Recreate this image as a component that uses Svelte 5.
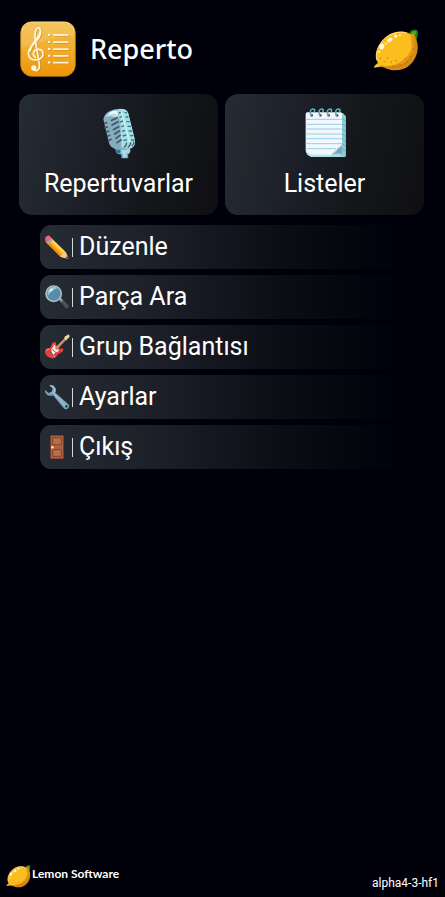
<script lang="ts">
  const version = 'alpha4-3-hf1';
  const menu = [
    { icon: 'pencil', label: 'Düzenle' },
    { icon: 'search', label: 'Parça Ara' },
    { icon: 'guitar', label: 'Grup Bağlantısı' },
    { icon: 'wrench', label: 'Ayarlar' },
    { icon: 'door', label: 'Çıkış' },
  ];
</script>

{#snippet lemon()}
  <svg class="lemon" viewBox="38 36 140 128" aria-hidden="true">
    <path d="M150 48 Q154 38 168 40 L174 42 Q176 56 171 70 L160 62Z" fill="#1f7a1c" />
    <path d="M154 47 L168 43 L171 52 L160 58Z" fill="#49a62a" />
    <path d="M42 154 L53 142 C42 121 49 91 69 69 C90 47 122 39 150 51 L158 51 Q168 55 168 65 C181 93 172 128 150 147 C130 166 98 168 75 156 Q61 151 42 154Z" fill="#d98a16" />
    <path d="M42 153 L54 140 C43 119 51 91 71 70 C91 49 122 42 148 53 L162 57 C170 88 162 119 138 138 C113 156 80 152 60 149Z" fill="#fcbe1f" />
    <path d="M152 54 L164 58 C172 91 160 124 137 143 C116 158 93 155 77 150 C116 151 149 125 156 92Z" fill="#b8660e" opacity=".4" />
    <path d="M50 133 C43 111 55 84 73 68 C91 50 117 43 140 50" fill="none" stroke="#ffe889" stroke-width="3" />
    <path d="M50 143 L42 154 L60 151" fill="none" stroke="#fff0b0" stroke-width="2" />
    <g fill="#fffbe5">
      <ellipse cx="89" cy="71" rx="9" ry="6" transform="rotate(-35 89 71)" />
      <ellipse cx="65" cy="91" rx="7" ry="9" transform="rotate(25 65 91)" />
      <circle cx="107" cy="59" r="5" /><circle cx="120" cy="57" r="3" />
      <circle cx="77" cy="82" r="3" /><circle cx="57" cy="107" r="3" />
    </g>
    <g fill="#b86b0b">
      <circle cx="61" cy="128" r="2" /><circle cx="72" cy="136" r="2" /><circle cx="82" cy="126" r="2" />
      <circle cx="94" cy="138" r="2" /><circle cx="108" cy="134" r="2" /><circle cx="120" cy="146" r="2" />
      <circle cx="136" cy="128" r="2" /><circle cx="151" cy="121" r="2" /><circle cx="161" cy="98" r="2" />
      <circle cx="144" cy="139" r="2" /><circle cx="99" cy="151" r="2" />
    </g>
  </svg>
{/snippet}

<div class="app">
  <header>
    <svg class="logo" viewBox="30 35 166 166" aria-hidden="true">
      <defs>
        <linearGradient id="gold" x1="0" y1="0" x2="0" y2="1">
          <stop offset="0" stop-color="#f1bd45" />
          <stop offset=".5" stop-color="#f2ae2c" />
          <stop offset="1" stop-color="#ec9307" />
        </linearGradient>
      </defs>
      <rect x="32" y="37" width="162" height="162" rx="34" fill="url(#gold)" stroke="#c98a20" stroke-width="2" />
      <path d="M34 68 Q34 39 62 39 H164 Q192 39 192 67 V82 Q130 82 88 99 Q56 112 34 112Z" fill="#fff" opacity=".13" />
      <path d="M36 61 Q40 40 62 39 H164 Q185 40 190 61" fill="none" stroke="#ffe19a" stroke-width="2" />
      {#each ['dark', 'light'] as tone}
        <g class={tone}>
          <path d="M71 180 Q81 187 87 174 Q89 166 84 145 L76 96 C72 75 75 58 84 55 C93 57 93 73 85 86 C75 101 55 113 55 131 C55 145 65 151 78 150 C92 149 100 140 98 130 C95 115 75 117 70 129 Q68 138 76 143" fill="none" stroke-width="5" stroke-linecap="round" />
          <path d="M91 68 C84 90 62 102 59 125" fill="none" stroke-width="6" />
          <circle cx="71" cy="174" r="8" stroke="none" />
          {#each [76, 97, 118, 138, 158] as y}
            <rect x="113" y={y - 3} width="7" height="6" stroke="none" />
            <rect x="128" y={y - 2} width="46" height="5" stroke="none" />
          {/each}
        </g>
      {/each}
    </svg>
    <h1>Reperto</h1>
    {@render lemon()}
  </header>

  <main>
    <div class="cards">
      <button class="card">
        <svg viewBox="-4 20 150 156" aria-hidden="true">
          <path d="M64 143 L102 143 L106 151 Q104 160 98 163 L99 174 H78 V163 L66 160 Q60 155 60 146Z" fill="#6fa5b9" />
          <path d="M78 145 H105 L101 159 H94 V172 H83 L82 159 H77Z" fill="#a4dce6" />
          <circle cx="69" cy="153" r="6" fill="#20768a" />
          <path d="M24 57 Q26 43 39 34 Q60 22 84 26 Q96 28 99 39 L118 116 Q123 134 110 143 Q91 154 60 146 Q45 142 41 128Z" fill="#86acbd" />
          <path d="M67 28 Q93 20 99 40 L118 116 Q123 135 109 142 Q94 148 78 141 L75 67Z" fill="#a5dfe7" />
          <path d="M29 51 Q43 28 67 30 L72 56 Q49 43 29 51Z" fill="#b9dbe5" />
          <path d="M42 37 Q53 30 65 32 L67 44 Q55 37 42 44Z" fill="#ecf8fa" />
          <g fill="none" stroke="#405565" stroke-width="5" stroke-linecap="round">
            <path d="M28 69 L34 67 M29 82 L36 80 M33 95 L40 92 M37 108 L43 105 M40 121 L47 117" />
            <path d="M49 60 L66 52 M50 74 L68 64 M54 88 L70 79 M58 101 L72 92 M62 114 L74 105 M65 127 L77 119" />
          </g>
          <g fill="none" stroke="#367a88" stroke-width="4">
            <path d="M70 38 L80 35 M88 37 L95 37 M72 51 L81 48 M91 50 L99 50 M74 65 L84 62 M93 64 L103 64 M78 79 L87 76 M97 78 L107 78 M80 93 L90 90 M100 92 L110 92 M82 107 L93 104 M104 106 L114 106 M84 121 L95 118 M107 119 L118 119" />
            <path d="M86 141 Q93 137 94 127 M97 141 Q106 136 106 126 M109 137 Q116 132 116 124" stroke="#405565" />
          </g>
          <path d="M77 31 L103 126" stroke="#caf3f5" stroke-width="4" />
        </svg>
        Repertuvarlar
      </button>
      <button class="card">
        <svg viewBox="4 18 150 156" aria-hidden="true">
          <path d="M29 36 H132 L141 45 V166 Q140 168 136 168 H37 L25 159Z" fill="#a8dce5" />
          <path d="M130 39 L141 47 V166 H127Z" fill="#8acbd6" />
          <path d="M26 34 H126 Q130 34 130 39 V131 L99 161 H34 L21 151 V39 Q21 34 26 34Z" fill="#f3f7fc" />
          <path d="M21 151 L34 161 H99 L96 166 H34 Q24 163 21 151Z" fill="#c4e3e9" />
          <path d="M21 55 H130 M21 70 H130 M21 84 H130 M21 99 H130 M21 113 H130 M21 128 H130 M21 143 H112" stroke="#93cfed" stroke-width="3" />
          <path d="M99 158 Q116 154 117 142 Q129 140 130 130 V158Z" fill="#75a8bc" />
          <path d="M99 158 Q116 154 117 142 Q129 140 130 130 Z" fill="#b3d9e3" />
          <path d="M132 54 L140 61 M132 69 L140 76 M132 84 L140 91 M132 99 L140 106 M132 114 L140 121 M132 129 L140 136 M132 144 L140 151" stroke="#4c9baa" stroke-width="2" />
          {#each [37, 63, 88, 113] as x}
            <circle cx={x + 2} cy="43" r="4" fill="#33485b" />
            <path d="M{x} 43 Q{x - 6} 25 {x + 6} 24 Q{x + 13} 24 {x + 10} 31" fill="none" stroke="#5baebb" stroke-width="5" stroke-linecap="round" />
          {/each}
        </svg>
        Listeler
      </button>
    </div>

    <nav>
      {#each menu as item}
        <button class="row">
          <svg viewBox="0 0 78 78" aria-hidden="true">
            {#if item.icon === 'pencil'}
              <path d="M19 12 L65 54 L74 74 Q73 76 69 75 L49 68 L6 25Z" fill="#f9b41d" />
              <path d="M22 12 L64 53 L59 59 L16 18Z" fill="#ffd34f" />
              <path d="M11 21 L53 64 L49 68 L7 26Z" fill="#e88a16" />
              <path d="M65 54 L74 74 L49 68 L55 60Z" fill="#efc997" />
              <path d="M70 66 L74 74 Q72 76 64 73Z" fill="#38434d" />
              <path d="M17 8 L27 18 L13 31 L4 22Z" fill="#9aafba" />
              <path d="M3 17 Q2 10 9 6 Q15 2 20 9 L23 13 L9 26 L6 23Z" fill="#f06376" />
            {:else if item.icon === 'search'}
              <path d="M44 46 L51 41 L59 50 L52 57Z" fill="#8a989e" />
              <path d="M51 55 L58 48 L73 64 Q76 69 71 73 Q67 75 63 70Z" fill="#4c4f53" />
              <circle cx="29" cy="29" r="23" fill="#578da9" stroke="#a8bbc2" stroke-width="5" />
              <path d="M12 35 A19 19 0 0 1 41 13 Q25 16 12 35Z" fill="#9bc6d6" />
              <ellipse cx="21" cy="18" rx="7" ry="4" fill="#d8edf1" transform="rotate(-35 21 18)" />
            {:else if item.icon === 'guitar'}
              <path d="M3 54 Q3 43 14 42 Q22 41 22 33 Q23 25 31 24 Q38 24 36 32 L48 45 Q56 40 58 46 Q59 53 50 56 Q40 59 38 67 Q32 76 20 72 Q4 67 3 54Z" fill="#ee3b3b" />
              <path d="M22 45 Q29 39 30 31 Q34 35 35 38 L44 47 Q47 51 38 54 Q31 57 28 63 Q21 56 22 45Z" fill="#f6efe8" />
              <path d="M32 43 L61 13 L66 18 L38 49Z" fill="#b98762" />
              <path d="M35 44 L63 15" stroke="#e0b993" stroke-width="2" />
              <path d="M60 12 L64 6 Q70 5 74 1 L77 7 Q75 13 70 15 L66 20Z" fill="#efcf9c" />
              <path d="M25 46 L35 55 M18 54 L26 62" stroke="#505b62" stroke-width="3" />
              <path d="M7 51 Q8 46 15 46" fill="none" stroke="#ff8a80" stroke-width="3" />
              <circle cx="31" cy="67" r="2" fill="#ffc0a0" />
            {:else if item.icon === 'wrench'}
              <path d="M16 4 Q28 1 34 11 Q38 18 34 26 L73 61 Q78 67 72 73 Q66 79 60 73 L27 34 Q18 38 9 32 Q2 27 3 18 L14 27 L23 23 L26 14Z" fill="#7eacc0" />
              <path d="M18 5 Q28 4 31 12 Q34 21 28 28 L65 67" fill="none" stroke="#a8cdda" stroke-width="3" />
              <path d="M6 26 Q15 35 27 32 L60 73" fill="none" stroke="#527e94" stroke-width="2" />
              <circle cx="67" cy="67" r="4" fill="#304651" />
            {:else}
              <rect x="18" y="3" width="42" height="72" rx="2" fill="#793a26" />
              <rect x="21" y="6" width="36" height="67" fill="#ae6243" />
              <path d="M26 11 H52 V32 H26Z M26 47 H52 V67 H26Z" fill="#b66f4e" stroke="#80432e" stroke-width="3" />
              <circle cx="25" cy="40" r="4" fill="#ffd9b0" />
            {/if}
          </svg>
          <span class="divider"></span>
          {item.label}
        </button>
      {/each}
    </nav>
  </main>

  <footer>
    <div class="brand">
      {@render lemon()}
      <span>Lemon Software</span>
    </div>
    <span class="version">{version}</span>
  </footer>
</div>

<style>
  :global(body) {
    margin: 0;
    background: #00000a;
  }
  .app {
    display: flex;
    flex-direction: column;
    min-height: 100vh;
    box-sizing: border-box;
    color: #fff;
    font-family: Roboto, sans-serif;
  }
  header {
    display: flex;
    align-items: center;
    padding: 21px 26px 17px 20px;
  }
  .logo {
    width: 56px;
    height: 56px;
  }
  .dark {
    fill: #b9781b;
    stroke: #b9781b;
    transform: translate(2px, 2px);
    opacity: .6;
  }
  .light {
    fill: #fff6df;
    stroke: #fff6df;
  }
  h1 {
    flex: 1;
    margin: 0 0 0 14px;
    font: 500 27px/36px "Noto Sans", sans-serif;
  }
  .lemon {
    width: 46px;
    height: 43px;
  }
  button {
    border: 0;
    color: inherit;
    font: 25px/30px Roboto, sans-serif;
    cursor: pointer;
  }
  .cards {
    display: grid;
    grid-template-columns: 1fr 1fr;
    gap: 7px;
    padding: 0 21px 0 19px;
  }
  .card {
    display: flex;
    flex-direction: column;
    align-items: center;
    gap: 10px;
    padding: 13px 8px 16px;
    border-radius: 13px;
    background: linear-gradient(100deg, #262c33, #1b1e26 40%, #14171a 65%, #0f0f13);
  }
  .card svg {
    width: 50px;
    height: 52px;
  }
  nav {
    display: flex;
    flex-direction: column;
    gap: 6px;
    padding: 10px 40px 0;
  }
  .row {
    display: flex;
    align-items: center;
    padding: 7px 4px;
    border-radius: 11px;
    background: linear-gradient(90deg, #262c33, #1b1e27 35%, #0d0d15 65%, #00000a);
    text-align: left;
  }
  .row svg {
    width: 26px;
    height: 26px;
  }
  .divider {
    width: 1px;
    height: 19px;
    margin: 0 6px 0 2px;
    background: #d5d7da;
  }
  footer {
    display: flex;
    justify-content: space-between;
    align-items: flex-end;
    margin-top: auto;
    padding: 0 6px;
  }
  .brand {
    display: flex;
    align-items: flex-start;
    gap: 1px;
    padding-bottom: 9px;
    font: 700 12px/20px Lato, sans-serif;
  }
  .brand .lemon {
    width: 25px;
    height: 24px;
  }
  .version {
    padding-bottom: 6px;
    font-size: 12px;
    line-height: 16px;
  }
</style>
